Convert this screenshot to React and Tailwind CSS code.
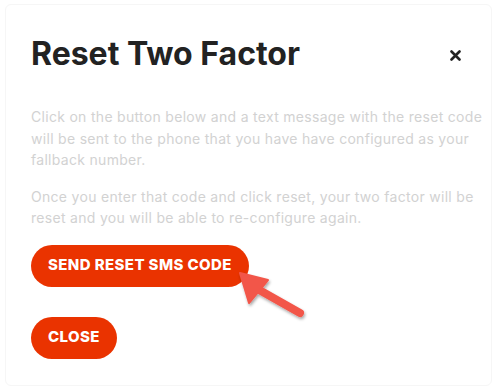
import React from 'react';

function Arrow() {
  // annotation arrow pointing at the send button
  return (
    <svg className="absolute left-[190px] top-[20px]" width="100" height="65" viewBox="0 0 100 65">
      <defs>
        <filter id="sh" x="-20%" y="-20%" width="150%" height="150%">
          <feDropShadow dx="1" dy="2" stdDeviation="1.5" floodColor="#000" floodOpacity="0.35" />
        </filter>
      </defs>
      <g filter="url(#sh)">
        <line x1="79" y1="48" x2="33" y2="22" stroke="#f2564a" strokeWidth="8" strokeLinecap="round" />
        <polygon points="19,8 47,15 28,38" fill="#f2564a" stroke="#f2564a" strokeWidth="2" strokeLinejoin="round" />
      </g>
    </svg>
  );
}

export default function App() {
  return (
    <div className="w-[497px] h-[391px] bg-white p-[5px] pt-[4px]" style={{ fontFamily: 'Inter, "Liberation Sans", sans-serif' }}>
      <div className="h-full rounded-md border border-[#f6f6f6] pl-[25px] pr-[18px] pt-[33px]">
        <div className="flex items-center justify-between pr-[6px]">
          <h1 className="text-[32px] font-bold text-[#222] leading-none">Reset Two Factor</h1>
          <button type="button" className="text-[#222] mr-[6px] mt-[2px]">
            <svg width="11" height="11" viewBox="0 0 11 11">
              <path d="M1.5 1.5 L9.5 9.5 M9.5 1.5 L1.5 9.5" stroke="#222" strokeWidth="2.6" strokeLinecap="round" />
            </svg>
          </button>
        </div>
        <div className="mt-[36px] text-[14px] leading-[21.5px] text-[#d2d2d2] space-y-[15px] tracking-[0.3px] whitespace-nowrap">
          <p>Click on the button below and a text message with the reset code<br />will be sent to the phone that you have have configured as your<br />fallback number.</p>
          <p>Once you enter that code and click reset, your two factor will be<br />reset and you will be able to re-configure again.</p>
        </div>
        <div className="relative mt-[16px] flex flex-col items-start gap-[30px]">
          <button type="button" className="h-[42px] px-[17px] rounded-full bg-[#ea3300] text-white font-extrabold text-[15px] tracking-[0.4px]">SEND RESET SMS CODE</button>
          <button type="button" className="h-[42px] px-[17px] rounded-full bg-[#ea3300] text-white font-extrabold text-[15px] tracking-[0.4px]">CLOSE</button>
          <Arrow />
        </div>
      </div>
    </div>
  );
}
